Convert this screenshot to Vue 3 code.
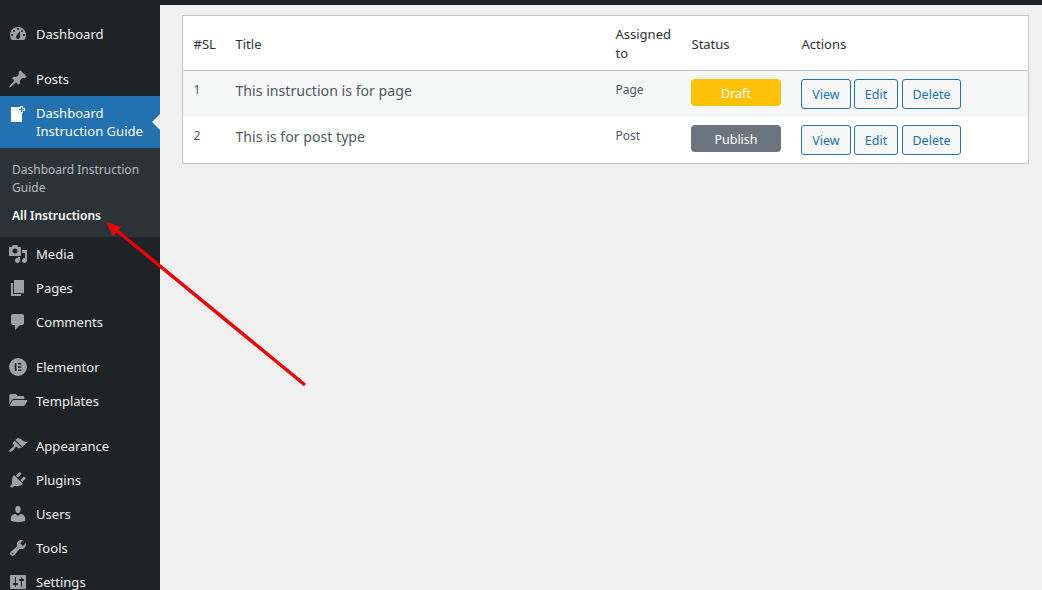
<template>
  <div class="page">
    <div class="topbar"></div>
    <div class="body">
      <aside class="sidebar">
        <nav class="menu">
          <template v-for="group in menuGroups" :key="group[0].label">
            <div class="menu-group">
              <div v-for="item in group" :key="item.label" :class="['menu-block', { 'is-active': item.active }]">
                <a class="menu-item">
                  <svg class="menu-icon" :viewBox="item.box || '0 0 20 20'" aria-hidden="true">
                    <path :d="item.icon" fill-rule="evenodd" />
                  </svg>
                  <span class="menu-label">{{ item.label }}</span>
                </a>
                <ul v-if="item.children" class="submenu">
                  <li v-for="child in item.children" :key="child.label" :class="{ current: child.current }">{{ child.label }}</li>
                </ul>
              </div>
            </div>
          </template>
        </nav>
      </aside>

      <main class="content">
        <table class="list-table">
          <colgroup>
            <col class="col-sl" />
            <col class="col-title" />
            <col class="col-assigned" />
            <col class="col-status" />
            <col />
          </colgroup>
          <thead>
            <tr>
              <th>#SL</th>
              <th>Title</th>
              <th>Assigned to</th>
              <th>Status</th>
              <th>Actions</th>
            </tr>
          </thead>
          <tbody>
            <tr v-for="row in rows" :key="row.id">
              <td class="cell-small">{{ row.id }}</td>
              <td class="cell-title">{{ row.title }}</td>
              <td class="cell-small">{{ row.assigned }}</td>
              <td><span :class="['badge', row.status.toLowerCase()]">{{ row.status }}</span></td>
              <td class="cell-actions">
                <button type="button" class="btn-view">View</button>
                <button type="button" class="btn-edit">Edit</button>
                <button type="button" class="btn-delete">Delete</button>
              </td>
            </tr>
          </tbody>
        </table>
      </main>
    </div>

    <svg class="annotation" viewBox="0 0 1042 590" aria-hidden="true">
      <line x1="305" y1="385" x2="116" y2="230" stroke="#f00000" stroke-width="3.4" />
      <polygon points="106,222 121,227 113,236" fill="#f00000" />
    </svg>
  </div>
</template>

<script setup>
const menuGroups = [
  [
    {
      label: 'Dashboard',
      icon: 'M3.76 16h12.48c1.1-1.37 1.76-3.11 1.76-5 0-4.42-3.58-8-8-8s-8 3.58-8 8c0 1.89.66 3.63 1.76 5zM10 4c.55 0 1 .45 1 1s-.45 1-1 1-1-.45-1-1 .45-1 1-1zM6 6c.55 0 1 .45 1 1s-.45 1-1 1-1-.45-1-1 .45-1 1-1zm8 0c.55 0 1 .45 1 1s-.45 1-1 1-1-.45-1-1 .45-1 1-1zm-5.37 5.55L12 7v6c0 1.1-.9 2-2 2s-2-.9-2-2c0-.57.24-1.08.63-1.45zM4 10c.55 0 1 .45 1 1s-.45 1-1 1-1-.45-1-1 .45-1 1-1zm12 0c.55 0 1 .45 1 1s-.45 1-1 1-1-.45-1-1 .45-1 1-1z',
    },
  ],
  [
    {
      label: 'Posts',
      icon: 'M10.44 3.02l1.82-1.82 6.36 6.35-1.83 1.82c-1.05-.68-2.48-.57-3.41.36l-.75.75c-.92.93-1.04 2.35-.35 3.41l-1.83 1.82-2.41-2.41-2.8 2.79c-.42.42-3.38 2.71-3.8 2.29s1.86-3.39 2.28-3.81l2.79-2.79L4.1 9.36l1.83-1.82c1.05.69 2.48.57 3.4-.36l.75-.75c.93-.92 1.05-2.35.36-3.41z',
    },
    {
      label: 'Dashboard Instruction Guide',
      active: true,
      icon: 'M17 7V4h-2V2h-3v1H3v15h11V9h1V7h2zm-1-2v1h-2v2h-1V6h-2V5h2V3h1v2h2z',
      children: [
        { label: 'Dashboard Instruction Guide' },
        { label: 'All Instructions', current: true },
      ],
    },
    {
      label: 'Media',
      icon: 'M13 11V4c0-.55-.45-1-1-1h-1.67L9 1H5L3.67 3H2c-.55 0-1 .45-1 1v7c0 .55.45 1 1 1h10c.55 0 1-.45 1-1zM7 4.5c1.38 0 2.5 1.12 2.5 2.5S8.38 9.5 7 9.5 4.5 8.38 4.5 7 5.62 4.5 7 4.5zM14 6h5v10.5c0 1.38-1.12 2.5-2.5 2.5S14 17.88 14 16.5s1.12-2.5 2.5-2.5c.17 0 .34.02.5.05V9h-3V6zm-4 8.05V13h2v3.5c0 1.38-1.12 2.5-2.5 2.5S7 17.88 7 16.5 8.12 14 9.5 14c.17 0 .34.02.5.05z',
    },
    { label: 'Pages', icon: 'M6 15V2h10v13H6zm-1 1h8v2H3V5h2v11z' },
    {
      label: 'Comments',
      icon: 'M5 2h9c1.1 0 2 .9 2 2v7c0 1.1-.9 2-2 2h-2l-5 5v-5H5c-1.1 0-2-.9-2-2V4c0-1.1.9-2 2-2z',
    },
  ],
  [
    {
      label: 'Elementor',
      icon: 'M10 1a9 9 0 1 0 0 18a9 9 0 0 0 0-18zM6.8 6h1.6v8H6.8zM10 6h3.4v1.6H10zM10 9.2h3.4v1.6H10zM10 12.4h3.4V14H10z',
    },
    {
      label: 'Templates',
      box: '-42 -30 640 640',
      icon: 'M572.694 292.093L500.27 416.248A63.997 63.997 0 0 1 444.989 448H45.025c-18.523 0-30.064-20.093-20.731-36.093l72.424-124.155A64 64 0 0 1 152 256h399.964c18.523 0 30.064 20.093 20.73 36.093zM152 224h328v-48c0-26.51-21.49-48-48-48H272l-64-64H48C21.49 64 0 85.49 0 112v278.046l69.077-118.418C86.214 242.25 117.989 224 152 224z',
    },
  ],
  [
    {
      label: 'Appearance',
      icon: 'M14.48 11.06L7.41 3.99l1.5-1.5c.5-.56 2.3-.47 3.51.32 1.21.8 1.43 1.28 2.91 2.1 1.18.64 2.45 1.26 4.45.85zm-.71.71L6.7 4.7 4.93 6.47c-.39.39-.39 1.02 0 1.41l1.06 1.06c.39.39.39 1.03 0 1.42-.6.6-1.43 1.11-2.21 1.69-.35.26-.7.53-1.01.84C1.43 13.23.78 14.8 1.5 15.5c.71.71 2.28.06 3.61-1.27.31-.31.58-.66.84-1.01.58-.78 1.09-1.61 1.69-2.21.39-.39 1.02-.39 1.41 0l1.06 1.06c.39.39 1.02.39 1.41 0z',
    },
    {
      label: 'Plugins',
      icon: 'M13.11 4.36L9.87 7.6 8 5.73l3.24-3.24c.35-.34 1.05-.2 1.56.32.52.51.66 1.21.31 1.55zm-8 1.77l.91-1.12 9.01 9.01-1.19.84c-.71.71-2.63 1.16-3.82 1.16H6.14L4.9 17.26c-.59.59-1.54.59-2.12 0-.59-.58-.59-1.53 0-2.12l1.24-1.24v-3.88c0-1.13.4-3.19 1.09-3.89zm7.26 3.97l3.24-3.24c.34-.35 1.04-.21 1.55.31.52.51.66 1.21.31 1.55l-3.24 3.25z',
    },
    {
      label: 'Users',
      icon: 'M10 9.25c-2.27 0-2.73-3.44-2.73-3.44C7 4.02 7.82 2 9.97 2c2.16 0 2.98 2.02 2.71 3.81 0 0-.41 3.44-2.68 3.44zm0 2.57L12.72 10c2.39 0 4.52 2.33 4.52 4.53v2.49s-3.65 1.13-7.24 1.13c-3.65 0-7.24-1.13-7.24-1.13v-2.49c0-2.25 1.94-4.48 4.47-4.48z',
    },
    {
      label: 'Tools',
      icon: 'M16.68 9.77c-1.34 1.34-3.3 1.67-4.95.99l-5.41 6.52c-.99.99-2.59.99-3.58 0s-.99-2.59 0-3.57l6.52-5.42c-.68-1.65-.35-3.61.99-4.95 1.28-1.28 3.12-1.62 4.72-1.06l-2.89 2.89 2.82 2.82 2.86-2.87c.53 1.58.18 3.39-1.08 4.65zM3.81 16.21c.4.39 1.04.39 1.43 0 .4-.4.4-1.04 0-1.43-.39-.4-1.03-.4-1.43 0-.39.39-.39 1.03 0 1.43z',
    },
    {
      label: 'Settings',
      icon: 'M18 16V4c0-.55-.45-1-1-1H3c-.55 0-1 .45-1 1v12c0 .55.45 1 1 1h14c.55 0 1-.45 1-1zM8 11h1c.55 0 1 .45 1 1s-.45 1-1 1H8v1.5c0 .28-.22.5-.5.5s-.5-.22-.5-.5V13H6c-.55 0-1-.45-1-1s.45-1 1-1h1V5.5c0-.28.22-.5.5-.5s.5.22.5.5V11zm5-2h-1c-.55 0-1-.45-1-1s.45-1 1-1h1V5.5c0-.28.22-.5.5-.5s.5.22.5.5V7h1c.55 0 1 .45 1 1s-.45 1-1 1h-1v5.5c0 .28-.22.5-.5.5s-.5-.22-.5-.5V9z',
    },
  ],
]

const rows = [
  { id: 1, title: 'This instruction is for page', assigned: 'Page', status: 'Draft' },
  { id: 2, title: 'This is for post type', assigned: 'Post', status: 'Publish' },
]
</script>

<style>
html,
body {
  margin: 0;
  background: #f0f0f1;
}
</style>

<style scoped>
.page {
  position: relative;
  width: 1042px;
  height: 590px;
  overflow: hidden;
  display: flex;
  flex-direction: column;
  background: #f0f0f1;
  font-family: "Noto Sans", "Open Sans", sans-serif;
  font-size: 13px;
  color: #2c3338;
}

.topbar {
  height: 5px;
  flex-shrink: 0;
  background: #1d2327;
}

.body {
  display: flex;
  flex: 1;
  min-height: 0;
}

.sidebar {
  width: 160px;
  flex-shrink: 0;
  background: #1d2327;
  padding-top: 12px;
}

.menu-group + .menu-group {
  margin-top: 11px;
}

.menu-item {
  display: flex;
  align-items: center;
  height: 34px;
  padding: 0 8px;
  box-sizing: border-box;
  color: #f0f0f1;
  font-size: 13.05px;
  line-height: 18px;
}

.menu-icon {
  width: 20px;
  height: 20px;
  flex-shrink: 0;
  margin-right: 8px;
  fill: #9ca2a7;
}

.is-active .menu-item {
  position: relative;
  height: 52px;
  padding: 8px;
  background: #2271b1;
  color: #fff;
  align-items: flex-start;
}

.is-active .menu-icon {
  fill: #fff;
}

.is-active .menu-item::after {
  content: "";
  position: absolute;
  right: 0;
  top: 18px;
  border: 8px solid transparent;
  border-right-color: #f0f0f1;
  border-left-width: 0;
}

.submenu {
  list-style: none;
  margin: 0;
  padding: 8px 0 7px;
  background: #2c3338;
  color: rgba(240, 246, 252, 0.7);
  font-size: 12px;
  line-height: 18px;
}

.submenu li {
  padding: 5px 12px;
}

.submenu .current {
  color: #fff;
  font-weight: 600;
}

.content {
  flex: 1;
  padding: 10px 13px 0 22px;
}

.list-table {
  width: 847px;
  table-layout: fixed;
  border-collapse: separate;
  border-spacing: 0;
  border: 1px solid #c3c4c7;
  background: #fff;
}

.col-sl {
  width: 42px;
}

.col-title {
  width: 380px;
}

.col-assigned {
  width: 76px;
}

.col-status {
  width: 110px;
}

th {
  height: 52px;
  padding: 2px 10px 0 10.5px;
  box-sizing: content-box;
  border-bottom: 1px solid #c3c4c7;
  text-align: left;
  font-weight: 400;
  font-size: 13px;
  line-height: 19px;
  color: #2c3338;
}

td {
  height: 30px;
  padding: 8px 10px;
  vertical-align: top;
  color: #50575e;
}

tbody tr:nth-child(odd) td {
  background: #f6f7f7;
}

.cell-small {
  padding: 9px 10px 7px 10.5px;
  font-size: 12px;
  line-height: 20px;
}

.cell-title {
  padding: 9px 10px 7px 10.5px;
  font-size: 14.15px;
  line-height: 22px;
  white-space: nowrap;
}

.badge {
  display: block;
  width: 90px;
  height: 27px;
  border-radius: 4px;
  text-align: center;
  font-size: 12.5px;
  line-height: 29px;
  color: #fff;
}

.badge.draft {
  background: #ffc107;
}

.badge.publish {
  background: #6c757d;
}

.cell-actions {
  white-space: nowrap;
  font-size: 0;
}

.cell-actions button {
  height: 30px;
  margin-right: 3px;
  padding: 2px 0 0;
  border: 1px solid #2271b1;
  border-radius: 3px;
  background: #f6f7f7;
  color: #2271b1;
  font-family: inherit;
  font-size: 12.5px;
  line-height: 26px;
}

.cell-actions .btn-view {
  width: 50px;
}

.cell-actions .btn-edit {
  width: 44px;
  margin-right: 4px;
}

.cell-actions .btn-delete {
  width: 59px;
}

.annotation {
  position: absolute;
  inset: 0;
  width: 100%;
  height: 100%;
  pointer-events: none;
}
</style>
